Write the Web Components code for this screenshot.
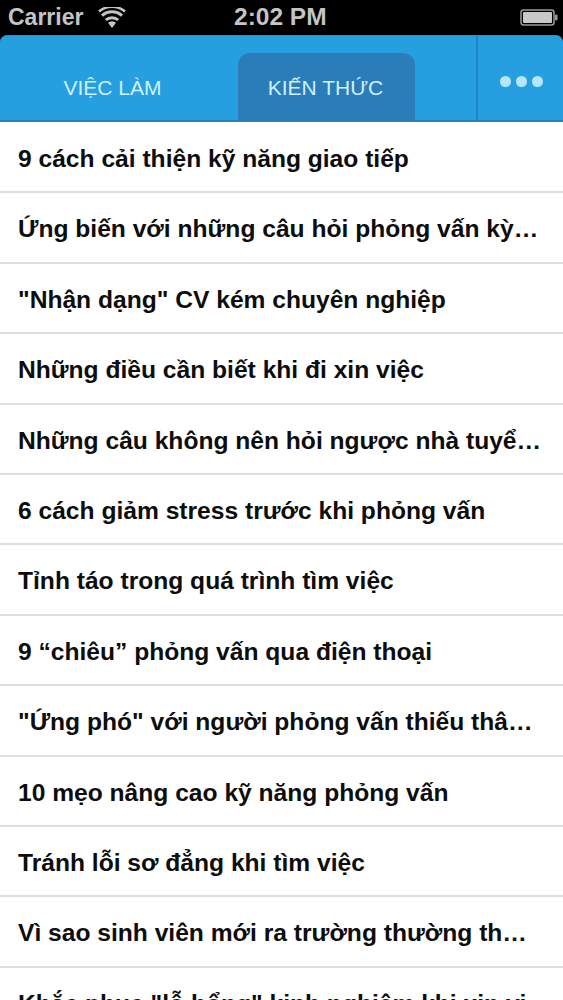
<!DOCTYPE html>
<html>
<head>
<meta charset="utf-8">
<title>Kiến thức</title>
<style>
  html, body { margin: 0; height: 100%; overflow: hidden; background: #000; }
  body { width: 563px; height: 1000px; display: flex; flex-direction: column; font-family: "Liberation Sans", Arial, sans-serif; }
</style>
</head>
<body>
<status-bar></status-bar>
<tab-header>
  <tab-item>VIỆC LÀM</tab-item>
  <tab-item active>KIẾN THỨC</tab-item>
</tab-header>
<article-list>
  <article-row>9 cách cải thiện kỹ năng giao tiếp</article-row>
  <article-row>Ứng biến với những câu hỏi phỏng vấn kỳ…</article-row>
  <article-row>"Nhận dạng" CV kém chuyên nghiệp</article-row>
  <article-row>Những điều cần biết khi đi xin việc</article-row>
  <article-row>Những câu không nên hỏi ngược nhà tuyể…</article-row>
  <article-row>6 cách giảm stress trước khi phỏng vấn</article-row>
  <article-row>Tỉnh táo trong quá trình tìm việc</article-row>
  <article-row>9 “chiêu” phỏng vấn qua điện thoại</article-row>
  <article-row>"Ứng phó" với người phỏng vấn thiếu thâ…</article-row>
  <article-row>10 mẹo nâng cao kỹ năng phỏng vấn</article-row>
  <article-row>Tránh lỗi sơ đẳng khi tìm việc</article-row>
  <article-row>Vì sao sinh viên mới ra trường thường th…</article-row>
  <article-row>Khắc phục "lỗ hổng" kinh nghiệm khi xin vi…</article-row>
</article-list>
<script>
class StatusBar extends HTMLElement {
  constructor() {
    super();
    this.attachShadow({mode: 'open'});
  }
  connectedCallback() {
    this.shadowRoot.innerHTML = `
    <style>
      :host { display: grid; grid-template-columns: 226px auto 1fr; align-items: center; height: 35px; flex: none;
        padding: 0 5px 0 8px; box-sizing: border-box; color: #c4c4c4; font-size: 23px; font-weight: bold; background: #000; }
      .left { display: flex; align-items: center; gap: 15px; }
      .time { font-size: 24.5px; line-height: 33px; padding-bottom: 2px; }
      .right { justify-self: end; display: flex; }
      svg { display: block; }
    </style>
    <div class="left">
      <span>Carrier</span>
      <svg width="28" height="21" viewBox="0 0 28 21">
        <path d="M14 21l-4-5.2a6 6 0 0 1 8 0z" fill="#c4c4c4"/>
        <path d="M7.8 13a9.3 9.3 0 0 1 12.4 0" fill="none" stroke="#c4c4c4" stroke-width="3"/>
        <path d="M4 8.6a15 15 0 0 1 20 0" fill="none" stroke="#c4c4c4" stroke-width="3"/>
        <path d="M1 4.6a20 20 0 0 1 26 0" fill="none" stroke="#c4c4c4" stroke-width="2.6"/>
      </svg>
    </div>
    <span class="time">2:02 PM</span>
    <div class="right">
      <svg width="38" height="17" viewBox="0 0 38 17">
        <rect x="1" y="1" width="33" height="15" rx="2.5" fill="none" stroke="#9a9a9a" stroke-width="1.5"/>
        <rect x="3" y="3" width="29" height="11" rx="1" fill="#c8c8c8"/>
        <rect x="35" y="5.5" width="2.5" height="6" rx="1" fill="#9a9a9a"/>
      </svg>
    </div>`;
  }
}

class TabHeader extends HTMLElement {
  constructor() {
    super();
    this.attachShadow({mode: 'open'});
  }
  connectedCallback() {
    this.shadowRoot.innerHTML = `
    <style>
      :host { display: flex; flex: none; height: 87px; box-sizing: border-box; background: #259fdf;
        border-top: 1px solid #2a8fd0; border-bottom: 2px solid #2a80bd; border-radius: 7px 7px 0 0; }
      .tabs { width: 476px; display: flex; align-items: flex-end; gap: 36px; padding-left: 25px; box-sizing: border-box; }
      .more { flex: 1; display: flex; align-items: center; justify-content: center; gap: 5.5px;
        border-left: 2px solid #2084c6; padding: 7px 0 0 2px; box-sizing: border-box; }
      .more i { width: 10.5px; height: 10.5px; border-radius: 50%; background: #b5e6fb; }
    </style>
    <div class="tabs"><slot></slot></div>
    <div class="more"><i></i><i></i><i></i></div>`;
  }
}

class TabItem extends HTMLElement {
  constructor() {
    super();
    this.attachShadow({mode: 'open'});
  }
  connectedCallback() {
    this.shadowRoot.innerHTML = `
    <style>
      :host { display: flex; align-items: center; justify-content: center; width: 177px; height: 67px;
        box-sizing: border-box; padding: 2px 2px 0 0; color: #d0f0fd; font-size: 21px; border-radius: 12px 12px 0 0; }
      :host([active]) { background: #2a7db8; }
    </style>
    <slot></slot>`;
  }
}

class ArticleList extends HTMLElement {
  constructor() {
    super();
    this.attachShadow({mode: 'open'});
  }
  connectedCallback() {
    this.shadowRoot.innerHTML = `
    <style>
      :host { display: block; flex: 1; min-height: 0; overflow: hidden; background: #fff; padding-top: 1px; }
    </style>
    <slot></slot>`;
  }
}

class ArticleRow extends HTMLElement {
  constructor() {
    super();
    this.attachShadow({mode: 'open'});
  }
  connectedCallback() {
    this.shadowRoot.innerHTML = `
    <style>
      :host { display: block; height: 70.4px; box-sizing: border-box; padding: 0 18px; line-height: 72px;
        border-bottom: 2px solid #dfdfdf; background: #fff; color: #0d0d0d; font-size: 24.6px; font-weight: bold;
        white-space: nowrap; overflow: hidden; }
    </style>
    <slot></slot>`;
  }
}

customElements.define('status-bar', StatusBar);
customElements.define('tab-header', TabHeader);
customElements.define('tab-item', TabItem);
customElements.define('article-list', ArticleList);
customElements.define('article-row', ArticleRow);
</script>
</body>
</html>
